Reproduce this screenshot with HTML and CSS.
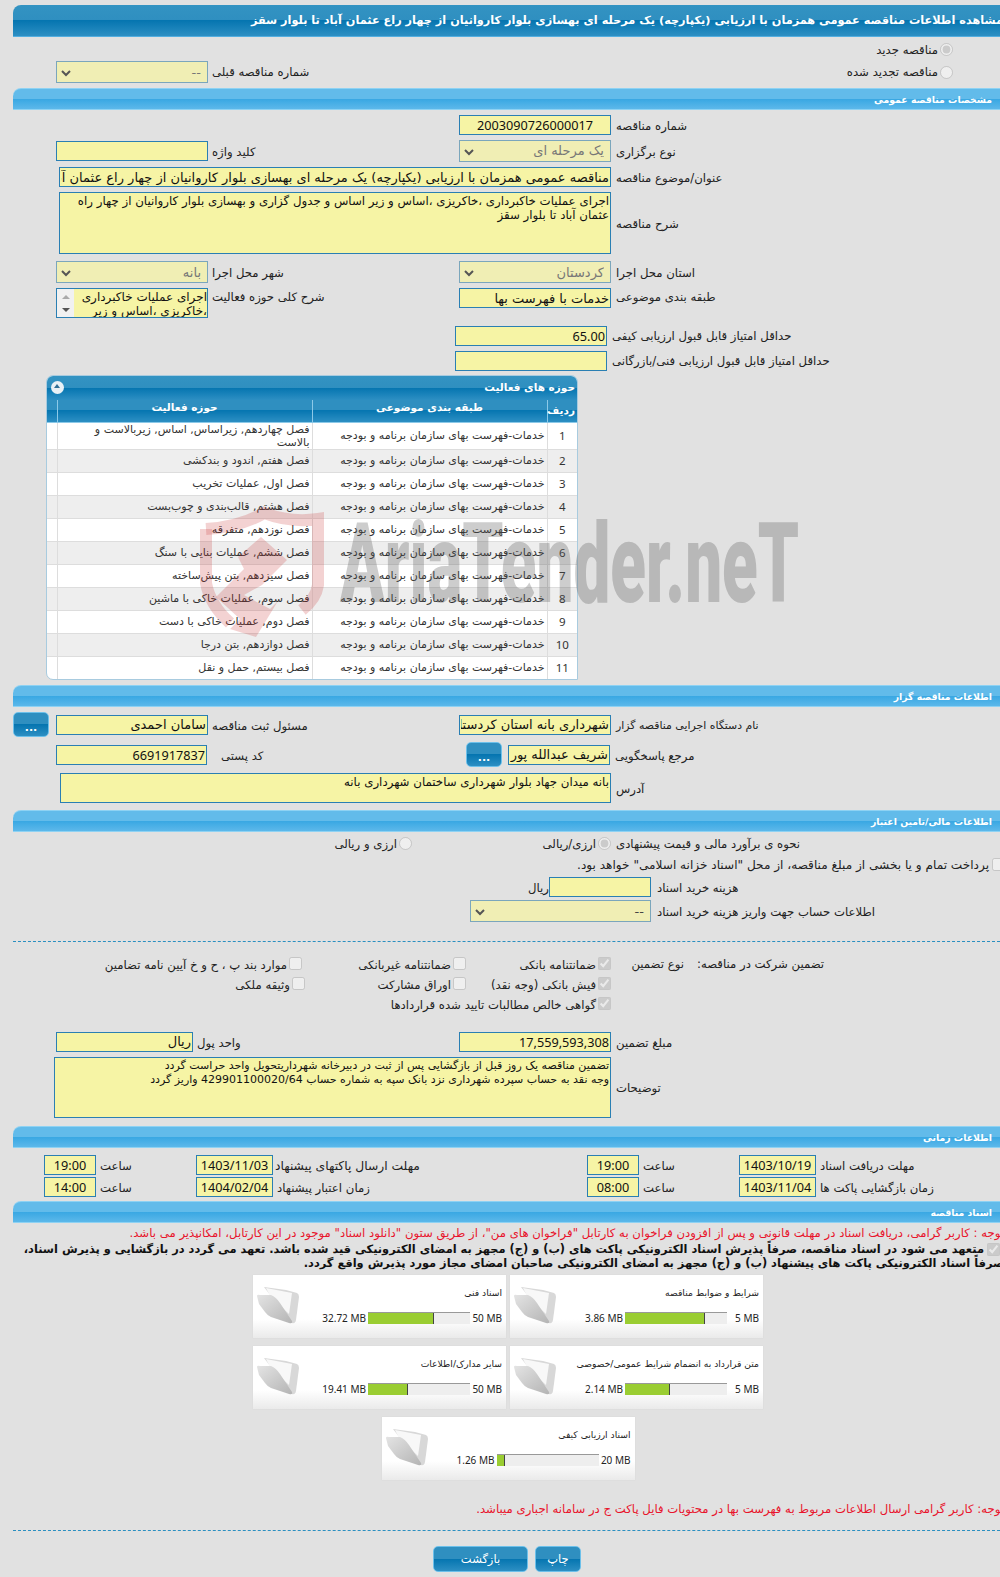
FILE: index.html
```html
<!DOCTYPE html>
<html lang="fa">
<head>
<meta charset="utf-8">
<title>مشاهده اطلاعات مناقصه</title>
<link rel="stylesheet" href="styles.css">
</head>
<body>
<div class="page">
  <div class="bar-dark title-bar"><span class="bar-text">مشاهده اطلاعات مناقصه عمومی همزمان با ارزیابی (یکپارچه) یک مرحله ای بهسازی بلوار کاروانیان از چهار راع عثمان آباد تا بلوار سقز</span></div>

  <div class="row h23">
    <div></div><div></div><div></div><div></div>
    <label class="radio-label"><input type="radio" disabled checked><span>مناقصه جدید</span></label>
  </div>
  <div class="row h28 pre">
    <div></div>
    <select class="ctl sel" disabled><option>--</option></select>
    <div class="lbl">شماره مناقصه قبلی</div>
    <div></div>
    <label class="radio-label"><input type="radio" disabled><span>مناقصه تجدید شده</span></label>
  </div>

  <div class="bar-light">مشخصات مناقصه عمومی</div>

  <div class="row h25 top2">
    <div></div><div></div><div></div>
    <input class="ctl inp num-center" value="2003090726000017" readonly>
    <div class="lbl lbl-r">شماره مناقصه</div>
  </div>
  <div class="row h27">
    <div></div>
    <input class="ctl inp" readonly>
    <div class="lbl">کلید واژه</div>
    <select class="ctl sel" disabled><option>یک مرحله ای</option></select>
    <div class="lbl lbl-r">نوع برگزاری</div>
  </div>
  <div class="row-wide h26">
    <input class="ctl inp big" value="مناقصه عمومی همزمان با ارزیابی (یکپارچه) یک مرحله ای بهسازی بلوار کاروانیان از چهار راع عثمان آباد تا بلوار سقز" readonly>
    <div class="lbl lbl-r">عنوان/موضوع مناقصه</div>
  </div>
  <div class="row-wide h66">
    <textarea class="ctl area" readonly>اجرای عملیات خاکبرداری ،خاکریزی ،اساس و زیر اساس و جدول گزاری و بهسازی بلوار کاروانیان از چهار راه عثمان آباد تا بلوار سقز</textarea>
    <div class="lbl lbl-r">شرح مناقصه</div>
  </div>
  <div class="row h28 top2">
    <div></div>
    <select class="ctl sel" disabled><option>بانه</option></select>
    <div class="lbl">شهر محل اجرا</div>
    <select class="ctl sel" disabled><option>کردستان</option></select>
    <div class="lbl lbl-r">استان محل اجرا</div>
  </div>
  <div class="row h37 start">
    <div></div>
    <div class="ctl mini-area">
      <div class="mini-scroll"><span class="tri-up"></span><span class="tri-down"></span></div>
      <div class="mini-text">اجرای عملیات خاکبرداری ،خاکریزی ،اساس و زیر</div>
    </div>
    <div class="lbl">شرح کلی حوزه فعالیت</div>
    <input class="ctl inp" value="خدمات با فهرست بها" readonly>
    <div class="lbl lbl-r">طبقه بندی موضوعی</div>
  </div>
  <div class="row-score h25">
    <input class="ctl inp num" value="65.00" readonly>
    <div class="lbl lbl-r">حداقل امتیاز قابل قبول ارزیابی کیفی</div>
  </div>
  <div class="row-score h25">
    <input class="ctl inp" readonly>
    <div class="lbl lbl-r">حداقل امتیاز قابل قبول ارزیابی فنی/بازرگانی</div>
  </div>

  <div class="panel">
    <div class="bar-dark panel-head"><span>حوزه های فعالیت</span><span class="toggle"></span></div>
    <table class="grid">
      <colgroup><col class="c-n"><col class="c-cat"><col class="c-act"><col class="c-e"></colgroup>
      <thead><tr><th class="th-n">ردیف</th><th>طبقه بندی موضوعی</th><th>حوزه فعالیت</th><th></th></tr></thead>
      <tbody>
        <tr class="tall"><td class="n">1</td><td class="cat">خدمات-فهرست بهای سازمان برنامه و بودجه</td><td class="act">فصل چهاردهم, زیراساس, اساس, زیربالاست  و بالاست</td><td></td></tr>
        <tr class="alt"><td class="n">2</td><td class="cat">خدمات-فهرست بهای سازمان برنامه و بودجه</td><td class="act">فصل هفتم, اندود و بندکشی</td><td></td></tr>
        <tr><td class="n">3</td><td class="cat">خدمات-فهرست بهای سازمان برنامه و بودجه</td><td class="act">فصل اول, عملیات تخریب</td><td></td></tr>
        <tr class="alt"><td class="n">4</td><td class="cat">خدمات-فهرست بهای سازمان برنامه و بودجه</td><td class="act">فصل هشتم, قالب‌بندی و چوب‌بست</td><td></td></tr>
        <tr><td class="n">5</td><td class="cat">خدمات-فهرست بهای سازمان برنامه و بودجه</td><td class="act">فصل نوزدهم, متفرقه</td><td></td></tr>
        <tr class="alt"><td class="n">6</td><td class="cat">خدمات-فهرست بهای سازمان برنامه و بودجه</td><td class="act">فصل ششم, عملیات بنایی با سنگ</td><td></td></tr>
        <tr><td class="n">7</td><td class="cat">خدمات-فهرست بهای سازمان برنامه و بودجه</td><td class="act">فصل سیزدهم, بتن پیش‌ساخته</td><td></td></tr>
        <tr class="alt"><td class="n">8</td><td class="cat">خدمات-فهرست بهای سازمان برنامه و بودجه</td><td class="act">فصل سوم, عملیات خاکی با ماشین</td><td></td></tr>
        <tr><td class="n">9</td><td class="cat">خدمات-فهرست بهای سازمان برنامه و بودجه</td><td class="act">فصل دوم, عملیات خاکی با دست</td><td></td></tr>
        <tr class="alt"><td class="n">10</td><td class="cat">خدمات-فهرست بهای سازمان برنامه و بودجه</td><td class="act">فصل دوازدهم, بتن درجا</td><td></td></tr>
        <tr><td class="n">11</td><td class="cat">خدمات-فهرست بهای سازمان برنامه و بودجه</td><td class="act">فصل بیستم, حمل و نقل</td><td></td></tr>
      </tbody>
    </table>
  </div>

  <div class="bar-light gap5">اطلاعات مناقصه گزار</div>

  <div class="row-btn h27 top4">
    <button class="btn-dots" type="button">...</button>
    <input class="ctl inp" value="سامان احمدی" readonly>
    <div class="lbl">مسئول ثبت مناقصه</div>
    <input class="ctl inp" value="شهرداری بانه استان کردستان" readonly>
    <div class="lbl lbl-r lbl-tight">نام دستگاه اجرایی مناقصه گزار</div>
  </div>
  <div class="row-resp h29 top2">
    <input class="ctl inp num" value="6691917837" readonly>
    <div class="lbl lbl-post">کد پستی</div>
    <button class="btn-dots" type="button">...</button>
    <input class="ctl inp inp-resp" value="شریف عبدالله پور" readonly>
    <div class="lbl lbl-r">مرجع پاسخگویی</div>
  </div>
  <div class="row-addr h34 top2">
    <textarea class="ctl area" readonly>بانه میدان جهاد بلوار شهرداری ساختمان شهرداری بانه</textarea>
    <div class="lbl lbl-r">آدرس</div>
  </div>

  <div class="bar-light gap5">اطلاعات مالی/تامین اعتبار</div>

  <div class="row-plain h21 estimate">
    <label class="radio-label"><span>ارزی و ریالی</span><input type="radio" disabled></label>
    <label class="radio-label"><span>ارزی/ریالی</span><input type="radio" disabled checked></label>
    <div class="lbl">نحوه ی برآورد مالی و قیمت پیشنهادی</div>
  </div>
  <div class="line-over far h23"><input class="chk" type="checkbox" disabled><span>پرداخت تمام و یا بخشی از مبلغ مناقصه، از محل "اسناد خزانه اسلامی" خواهد بود.</span></div>
  <div class="row-cost h22">
    <div class="lbl rial">ریال</div>
    <input class="ctl inp" readonly>
    <div class="lbl">هزینه خرید اسناد</div>
  </div>
  <div class="row-acct h24">
    <select class="ctl sel sel-dark" disabled><option>--</option></select>
    <div class="lbl">اطلاعات حساب جهت واریز هزینه خرید اسناد</div>
  </div>

  <div class="dash dash-a"></div>

  <div class="guar">
    <label class="opt nudge"><input type="checkbox" disabled><span>موارد بند پ ، ح و خ آیین نامه تضامین</span></label>
    <label class="opt"><input type="checkbox" disabled><span>ضمانتنامه غیربانکی</span></label>
    <label class="opt"><input type="checkbox" disabled checked><span>ضمانتنامه بانکی</span></label>
    <div class="lbl g-type">نوع تضمین</div>
    <div class="lbl g-head">تضمین شرکت در مناقصه:</div>

    <label class="opt"><input type="checkbox" disabled><span>وثیقه ملکی</span></label>
    <label class="opt"><input type="checkbox" disabled><span>اوراق مشارکت</span></label>
    <label class="opt"><input type="checkbox" disabled checked><span>فیش بانکی (وجه نقد)</span></label>
    <div></div><div></div>

    <div></div><div></div>
    <label class="opt"><input type="checkbox" disabled checked><span>گواهی خالص مطالبات تایید شده قراردادها</span></label>
    <div></div><div></div>
  </div>

  <div class="row-amount h25">
    <input class="ctl inp" value="ریال" readonly>
    <div class="lbl">واحد پول</div>
    <input class="ctl inp num" value="17,559,593,308" readonly>
    <div class="lbl lbl-r">مبلغ تضمین</div>
  </div>
  <div class="row-notes h62 top2">
    <textarea class="ctl area" readonly>تضمین مناقصه یک روز قبل از بازگشایی پس از ثبت در دبیرخانه شهرداریتحویل واحد حراست گردد
وجه نقد به حساب سپرده شهرداری نزد بانک سپه به شماره حساب 429901100020/64 واریز گردد</textarea>
    <div class="lbl lbl-r">توضیحات</div>
  </div>

  <div class="bar-light gap7">اطلاعات زمانی</div>

  <div class="row-time top7">
    <input class="ctl inp tm" value="19:00" readonly>
    <div class="lbl">ساعت</div>
    <input class="ctl inp dt" value="1403/11/03" readonly>
    <div class="lbl lbl-deadline">مهلت ارسال پاکتهای پیشنهاد</div>
    <input class="ctl inp tm" value="19:00" readonly>
    <div class="lbl">ساعت</div>
    <input class="ctl inp dt" value="1403/10/19" readonly>
    <div class="lbl">مهلت دریافت اسناد</div>
  </div>
  <div class="row-time top2">
    <input class="ctl inp tm" value="14:00" readonly>
    <div class="lbl">ساعت</div>
    <input class="ctl inp dt" value="1404/02/04" readonly>
    <div class="lbl">زمان اعتبار پیشنهاد</div>
    <input class="ctl inp tm" value="08:00" readonly>
    <div class="lbl">ساعت</div>
    <input class="ctl inp dt" value="1403/11/04" readonly>
    <div class="lbl">زمان بازگشایی پاکت ها</div>
  </div>

  <div class="bar-light gap4">اسناد مناقصه</div>

  <div class="line-over red h19">توجه : کاربر گرامی، دریافت اسناد در مهلت قانونی و پس از افزودن فراخوان به کارتابل "فراخوان های من"، از طریق ستون "دانلود اسناد" موجود در این کارتابل، امکانپذیر می باشد.</div>
  <div class="line-over bold h14"><input class="chk" type="checkbox" disabled checked><span>متعهد می شود در اسناد مناقصه، صرفاً پذیرش اسناد الکترونیکی پاکت های (ب) و (ج) مجهز به امضای الکترونیکی قید شده باشد. تعهد می گردد در بازگشایی و پذیرش اسناد،</span></div>
  <div class="line-over bold h14">صرفاً اسناد الکترونیکی پاکت های پیشنهاد (ب) و (ج) مجهز به امضای الکترونیکی صاحبان امضای مجاز مورد پذیرش واقع گردد.</div>

  <div class="cards">
    <div class="card">
      <svg class="folder" viewBox="0 0 44 40"><defs><linearGradient id="fold" x1="0" y1="0" x2="1" y2="1"><stop offset="0" stop-color="#e4e4e4"/><stop offset="1" stop-color="#b4b4b4"/></linearGradient></defs><path class="f-back" d="M8 1 L30 4 L41 7 Q43 8 43 11 L40 34 Q39 38 36 37 Z"/><path class="f-paper" d="M10 2 L36 7 L33 28 L14 10 Z"/><path fill="url(#fold)" d="M1 10 Q1 8 4 9 L15 9 Q20 11 24 17 L36 35 Q37 38 33 37 L15 31 Q11 29 9 26 L3 18 Z"/></svg>
      <div class="card-body"><div class="card-title">اسناد فنی</div><div class="meter"><span class="mx">50 MB</span><span class="track"><span class="fill f65"></span></span><span class="val">32.72 MB</span></div></div>
    </div>
    <div class="card">
      <svg class="folder" viewBox="0 0 44 40"><path class="f-back" d="M8 1 L30 4 L41 7 Q43 8 43 11 L40 34 Q39 38 36 37 Z"/><path class="f-paper" d="M10 2 L36 7 L33 28 L14 10 Z"/><path fill="url(#fold)" d="M1 10 Q1 8 4 9 L15 9 Q20 11 24 17 L36 35 Q37 38 33 37 L15 31 Q11 29 9 26 L3 18 Z"/></svg>
      <div class="card-body"><div class="card-title">شرایط و ضوابط مناقصه</div><div class="meter"><span class="mx">5 MB</span><span class="track"><span class="fill f78"></span></span><span class="val">3.86 MB</span></div></div>
    </div>
    <div class="card">
      <svg class="folder" viewBox="0 0 44 40"><path class="f-back" d="M8 1 L30 4 L41 7 Q43 8 43 11 L40 34 Q39 38 36 37 Z"/><path class="f-paper" d="M10 2 L36 7 L33 28 L14 10 Z"/><path fill="url(#fold)" d="M1 10 Q1 8 4 9 L15 9 Q20 11 24 17 L36 35 Q37 38 33 37 L15 31 Q11 29 9 26 L3 18 Z"/></svg>
      <div class="card-body"><div class="card-title">سایر مدارک/اطلاعات</div><div class="meter"><span class="mx">50 MB</span><span class="track"><span class="fill f39"></span></span><span class="val">19.41 MB</span></div></div>
    </div>
    <div class="card">
      <svg class="folder" viewBox="0 0 44 40"><path class="f-back" d="M8 1 L30 4 L41 7 Q43 8 43 11 L40 34 Q39 38 36 37 Z"/><path class="f-paper" d="M10 2 L36 7 L33 28 L14 10 Z"/><path fill="url(#fold)" d="M1 10 Q1 8 4 9 L15 9 Q20 11 24 17 L36 35 Q37 38 33 37 L15 31 Q11 29 9 26 L3 18 Z"/></svg>
      <div class="card-body"><div class="card-title">متن قرارداد به انضمام شرایط عمومی/خصوصی</div><div class="meter"><span class="mx">5 MB</span><span class="track"><span class="fill f44"></span></span><span class="val">2.14 MB</span></div></div>
    </div>
    <div class="card card-center">
      <svg class="folder" viewBox="0 0 44 40"><path class="f-back" d="M8 1 L30 4 L41 7 Q43 8 43 11 L40 34 Q39 38 36 37 Z"/><path class="f-paper" d="M10 2 L36 7 L33 28 L14 10 Z"/><path fill="url(#fold)" d="M1 10 Q1 8 4 9 L15 9 Q20 11 24 17 L36 35 Q37 38 33 37 L15 31 Q11 29 9 26 L3 18 Z"/></svg>
      <div class="card-body"><div class="card-title">اسناد ارزیابی کیفی</div><div class="meter"><span class="mx">20 MB</span><span class="track"><span class="fill f8"></span></span><span class="val">1.26 MB</span></div></div>
    </div>
  </div>

  <div class="line-over red note h20">توجه: کاربر گرامی ارسال اطلاعات مربوط به فهرست بها در محتویات فایل پاکت ج در سامانه اجباری میباشد.</div>

  <div class="dash dash-b"></div>

  <div class="actions">
    <button class="btn-main back" type="button">بازگشت</button>
    <button class="btn-main print" type="button">چاپ</button>
  </div>

  <div class="watermark">
    <svg class="shield" viewBox="0 0 126 132"><path class="sh-line" d="M6 24 Q40 22 64 8 Q90 18 118 14 L118 80 Q116 94 102 105"/><path class="sh-line" d="M6 24 L6 78 Q10 100 30 118"/><path class="sh-fill" d="M61 32 L87 55 L62 80 L44 90 L70 104 L78 96 L56 132 L30 124 L40 114 L16 92 L44 64 L38 52 Z"/></svg>
    <span class="wm-text">AriaTender.neT</span>
  </div>
</div>
</body>
</html>
```

FILE: styles.css
```css
* { box-sizing: border-box; }
html, body { margin: 0; padding: 0; }
body {
  background: #e1e1e1;
  font-family: "DejaVu Sans", sans-serif;
  font-size: 11px;
  color: #222;
  overflow-x: hidden;
}
.page {
  position: relative;
  width: 987px;
  height: 1577px;
  margin-left: 13px;
  padding-top: 5px;
  overflow: hidden;
}

/* bars */
.bar-dark {
  background: linear-gradient(#3393c2 0, #2f8fc0 48%, #0575b0 50%, #2d8fc3 100%);
  color: #fff;
  font-weight: bold;
  border-top-left-radius: 8px;
}
.title-bar {
  height: 32px;
  line-height: 31px;
  font-size: 11.3px;
  direction: rtl;
  white-space: nowrap;
  border-bottom: 1px solid #52aee0;
}
.bar-text { display: block; margin-right: -3px; }
.bar-light {
  height: 22px;
  line-height: 21px;
  padding-right: 8px;
  direction: rtl;
  color: #fff;
  font-weight: bold;
  font-size: 9.3px;
  background: linear-gradient(#62bbea 0, #62bbea 50%, #3aa8e3 52%, #5cb8ea 100%);
  border-top: 1px solid #8ed2f3;
  border-bottom: 1px solid #8ed2f3;
  border-top-left-radius: 8px;
}
.gap4 { margin-top: 4px; }
.gap5 { margin-top: 5px; }
.gap7 { margin-top: 8px; }
.top2 { margin-top: 2px; }
.top4 { margin-top: 4px; }
.top7 { margin-top: 7px; }

/* heights */
.h14 { height: 14px; }
.h19 { height: 19px; }
.h20 { height: 20px; }
.h21 { height: 21px; }
.h22 { height: 22px; }
.h23 { height: 23px; }
.h24 { height: 24px; }
.h25 { height: 25px; }
.h26 { height: 26px; }
.h27 { height: 27px; }
.h28 { height: 28px; }
.h29 { height: 29px; }
.h34 { height: 34px; }
.h37 { height: 37px; }
.h62 { height: 62px; }
.h66 { height: 66px; }

/* rows */
.row, .row-wide, .row-score, .row-btn, .row-resp, .row-addr, .row-plain,
.row-cost, .row-acct, .row-amount, .row-notes, .row-time {
  display: grid;
  align-items: center;
}
.row { grid-template-columns: 43px 152px 251px 152px 1fr; }
.row.start { align-items: start; padding-top: 2px; }
.row.pre { align-items: start; padding-top: 1px; }
.row.pre .lbl { padding-top: 4px; }
.row-wide { grid-template-columns: 46px 552px 1fr; }
.row-wide > :first-child { grid-column: 2; }
.row-score { grid-template-columns: 442px 152px 1fr; }
.row-score > :first-child { grid-column: 2; }
.row-score .lbl { padding-top: 0; }
.row-btn { grid-template-columns: 36px 7px 152px 251px 152px 1fr; }
.row-btn > :nth-child(2) { grid-column: 3; }
.row-resp { grid-template-columns: 43px 151px 259px 37px 5px 102px 1fr; }
.row-resp > :first-child { grid-column: 2; }
.row-resp > :nth-child(3) { grid-column: 4; }
.row-resp > :nth-child(4) { grid-column: 6; }
.row-addr { grid-template-columns: 47px 551px 1fr; }
.row-addr > :first-child { grid-column: 2; }
.row-plain.estimate { grid-template-columns: 399px 129px 70px 1fr; }
.row-plain.estimate > :first-child { grid-column: 1; }
.row-plain.estimate > :nth-child(2) { grid-column: 3; }
.row-plain.estimate > :nth-child(3) { grid-column: 4; padding-left: 5px; }
.row-cost { grid-template-columns: 514px 22px 102px 1fr; }
.row-cost > :first-child { grid-column: 2; padding-left: 0; text-align: right; }
.row-cost > :last-child { padding-left: 6px; }
.row-acct { grid-template-columns: 457px 181px 1fr; margin-top: 1px; }
.row-acct > :first-child { grid-column: 2; }
.row-acct > :last-child { padding-left: 6px; }
.row-amount { grid-template-columns: 43px 137px 266px 152px 1fr; margin-top: 16px; }
.row-amount > :first-child { grid-column: 2; }
.row-amount > :nth-child(3) { grid-column: 4; }
.row-notes { grid-template-columns: 41px 557px 1fr; }
.row-notes > :first-child { grid-column: 2; }
.row-time {
  height: 20px;
  grid-template-columns: 31px 52px 100px 77px 314px 52px 100px 77px 1fr;
}
.row-time > :first-child { grid-column: 2; }

/* controls */
.ctl {
  direction: rtl;
  font-family: "DejaVu Sans", sans-serif;
  font-size: 13px;
  color: #111;
  background: #f6f4a5;
  border: 1px solid #2a7fb3;
  border-radius: 0;
  outline: none;
  margin: 0;
  width: 100%;
}
.inp { height: 20px; padding: 0 1px; }
.big { height: 20px; }
.sel {
  height: 22px;
  appearance: none;
  background-color: #f0eeb4;
  background-image: url("data:image/svg+xml,%3Csvg xmlns='http://www.w3.org/2000/svg' width='10' height='7'%3E%3Cpath d='M1 1 L5 5 L9 1' fill='none' stroke='%23555' stroke-width='2'/%3E%3C/svg%3E");
  background-repeat: no-repeat;
  background-position: 4px 8px;
  border-color: #7ba6bc;
  color: #777;
  opacity: 1;
  padding: 0 6px;
}
.sel-dark { color: #444; }
.area {
  display: block;
  height: 100%;
  padding: 1px;
  font-size: 11.8px;
  line-height: 14px;
  resize: none;
  overflow: hidden;
}
.row-wide .area { height: 62px; }
.row-addr .area { height: 30px; }
.row-notes .area { height: 61px; font-size: 11px; }
.num, .num-center, .dt, .tm {
  font-family: "Noto Sans", "DejaVu Sans", sans-serif;
  font-size: 12.7px;
  direction: ltr;
}
.num { text-align: right; }
.num-center, .dt, .tm { text-align: center; }
.inp-resp { width: 102px; }

.lbl {
  direction: rtl;
  text-align: left;
  padding-left: 4px;
  padding-top: 2px;
  white-space: nowrap;
  font-size: 11.7px;
  color: #222;
}
.lbl-r { padding-left: 5px; }
.lbl-tight { font-size: 10.9px; }
.lbl-post { padding-left: 14px; }
.lbl-deadline { font-size: 12.3px; padding-left: 2px; }

.radio-label {
  display: flex;
  direction: rtl;
  align-items: center;
  gap: 2px;
  padding-top: 2px;
  font-size: 11.7px;
  color: #222;
  white-space: nowrap;
}
.radio-label input { margin: 0; width: 13px; height: 13px; flex: none; }
.row .radio-label { grid-column: 5; justify-self: end; margin-right: 47px; }
.row.pre .radio-label { margin-top: 2px; }
.estimate .radio-label { direction: ltr; justify-content: flex-end; }

.mini-area {
  height: 30px;
  display: flex;
  direction: ltr;
  overflow: hidden;
}
.mini-scroll {
  flex: none;
  width: 17px;
  background: #f1f1f1;
  display: flex;
  flex-direction: column;
  justify-content: space-between;
  align-items: center;
  padding: 6px 0 5px;
}
.tri-up, .tri-down { width: 0; height: 0; border-left: 4px solid transparent; border-right: 4px solid transparent; }
.tri-up { border-bottom: 4px solid #aaa; }
.tri-down { border-top: 4px solid #555; }
.mini-text {
  direction: rtl;
  flex: 1;
  font-size: 12px;
  line-height: 14px;
  padding-top: 1px;
  color: #111;
}

/* activity panel */
.panel {
  width: 532px;
  height: 305px;
  margin: 2px 0 0 33px;
  background: #fff;
  border: 1px solid #a8cbdf;
  border-radius: 7px 7px 0 7px;
  overflow: hidden;
}
.panel-head {
  height: 24px;
  display: flex;
  flex-direction: row-reverse;
  direction: ltr;
  justify-content: space-between;
  align-items: center;
  padding: 0 2px 2px 4px;
  border-radius: 0;
  font-size: 10.5px;
}
.toggle {
  position: relative;
  width: 13px;
  height: 13px;
  border-radius: 50%;
  background: #e9f1f6;
}
.toggle::after {
  content: "";
  position: absolute;
  left: 3px;
  top: 3px;
  border-left: 3.5px solid transparent;
  border-right: 3.5px solid transparent;
  border-bottom: 4px solid #2f6f96;
}
.grid {
  direction: rtl;
  width: 100%;
  table-layout: fixed;
  border-collapse: collapse;
  font-size: 11px;
}
.c-n { width: 30px; }
.c-cat { width: 235px; }
.c-act { width: 255px; }
.c-e { width: 10px; }
.grid th {
  height: 22px;
  padding: 0 2px 7px;
  color: #fff;
  font-size: 10.5px;
  font-weight: bold;
  background: linear-gradient(#2f8fc0 0, #2f8fc0 45%, #0575b0 47%, #2d8fc3 100%);
  border-left: 1px solid #8cc9e8;
  border-bottom: 1px solid #8cc9e8;
}
.grid .th-n { padding-bottom: 1px; }
.grid th:last-child { border-left: 0; }
.grid td {
  height: 23px;
  padding: 0 2px;
  border-left: 1px solid #ddd;
  border-bottom: 1px solid #ddd;
  color: #333;
  line-height: 13px;
}
.grid td:last-child { border-left: 0; }
.grid .tall td { height: 26px; }
.grid tr.alt td { background: #eeeeee; }
.grid .n { text-align: center; font-family: "Noto Sans", "DejaVu Sans", sans-serif; font-size: 11.5px; }
.grid .act { padding-left: 14px; }

/* misc lines */
.line-over {
  display: flex;
  direction: rtl;
  align-items: center;
  margin-right: -4px;
  white-space: nowrap;
  color: #222;
  font-size: 11.7px;
}
.line-over.far { margin-right: -9px; font-size: 12.1px; }
.chk { margin: 0 4px 0 3px; width: 13px; height: 13px; flex: none; }
.red { color: #e8142c; font-size: 11.7px; }
.bold { font-weight: bold; font-size: 11.4px; color: #111; }
.dash { border-top: 1px dashed #2a8fc0; }
.dash-a { margin-top: 18px; }
.dash-b { margin-top: 11px; }

/* guarantee */
.guar {
  display: grid;
  grid-template-columns: 292px 161px 145px 73px 1fr;
  grid-auto-rows: 20px;
  margin-top: 11px;
  align-items: center;
}
.opt {
  direction: rtl;
  display: flex;
  align-items: center;
  gap: 2px;
  font-size: 11.7px;
  color: #222;
  white-space: nowrap;
}
.opt span { padding-top: 3px; }
.opt input { margin: 0; width: 13px; height: 13px; flex: none; }
.opt.nudge { margin-right: 3px; }
.g-type { text-align: right; padding-left: 0; }
.g-head { padding-left: 13px; }

/* cards */
.cards {
  display: grid;
  grid-template-columns: 253px 253px;
  grid-auto-rows: 63px;
  column-gap: 4px;
  row-gap: 8px;
  width: 510px;
  margin: 5px 0 0 240px;
}
.card {
  display: flex;
  background: linear-gradient(#fff 0, #fff 70%, #eaeaea 100%);
  box-shadow: 0 0 1px #ccc;
}
.card-center { grid-column: 1 / 3; width: 253px; justify-self: center; }
.folder { width: 44px; height: 40px; margin: 11px 0 0 3px; flex: none; }
.f-back { fill: #d8d8d8; }
.f-paper { fill: #f8f8f8; }
.card-body { flex: 1; padding: 0 4px; min-width: 0; }
.card-title {
  direction: rtl;
  font-size: 9.2px;
  color: #222;
  margin-top: 11px;
  height: 25px;
  line-height: 14px;
  white-space: nowrap;
}
.meter {
  display: flex;
  direction: rtl;
  align-items: center;
  gap: 2px;
  font-size: 10px;
  font-family: "Noto Sans", "DejaVu Sans", sans-serif;
  color: #222;
}
.mx, .val { direction: ltr; unicode-bidi: isolate; white-space: nowrap; }
.mx { width: 30px; text-align: right; }
.track {
  direction: ltr;
  display: block;
  width: 102px;
  height: 12px;
  background: #eee;
  border-top: 1px solid #999;
}
.fill {
  display: block;
  height: 11px;
  background: #9acd32;
  border-right: 1px solid #444;
}
.f65 { width: 65%; }
.f78 { width: 78%; }
.f39 { width: 39%; }
.f44 { width: 44%; }
.f8 { width: 8%; }

.note { margin-top: 19px; }

/* actions */
.actions {
  display: flex;
  gap: 7px;
  margin: 15px 0 0 420px;
}
.btn-main, .btn-dots {
  color: #fff;
  font-family: "DejaVu Sans", sans-serif;
  background: linear-gradient(#2f8fc0 0, #2f8fc0 48%, #0575b0 50%, #2d8fc3 100%);
  border: 1px solid #6cc0ea;
  border-radius: 5px;
  padding: 0;
}
.btn-main { height: 26px; font-size: 11.5px; }
.back { width: 95px; }
.print { width: 46px; }
.btn-dots {
  width: 36px;
  height: 25px;
  font-size: 11px;
  font-weight: bold;
  line-height: 30px;
}

/* watermark */
.watermark {
  position: absolute;
  left: 0;
  top: 0;
  width: 100%;
  height: 100%;
  pointer-events: none;
}
.shield {
  position: absolute;
  left: 187px;
  top: 505px;
  width: 126px;
  height: 132px;
}
.sh-line { fill: none; stroke: rgba(200, 50, 50, .22); stroke-width: 12; }
.sh-fill { fill: rgba(200, 50, 50, .22); }
.wm-text {
  position: absolute;
  left: 327px;
  top: 499px;
  font-family: "Roboto", sans-serif;
  font-weight: 900;
  font-size: 112px;
  line-height: 130px;
  color: rgba(90, 90, 90, .3);
  transform: scaleX(.585);
  transform-origin: left center;
  white-space: nowrap;
}
```
